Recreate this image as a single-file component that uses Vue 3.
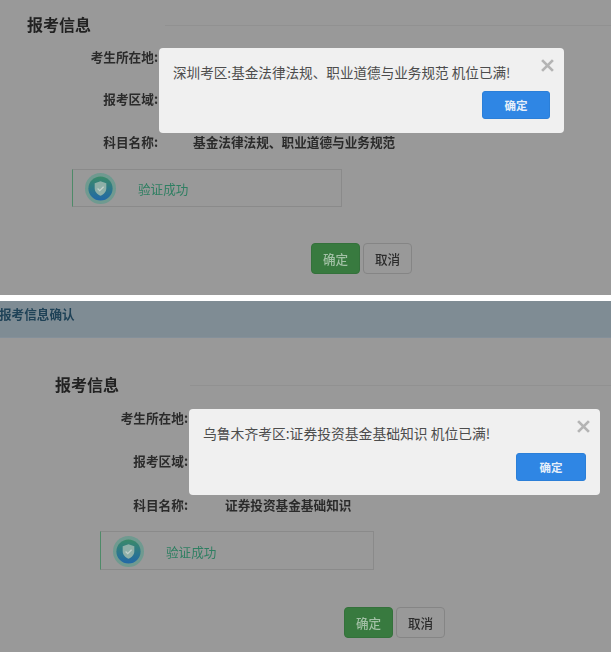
<script setup>
const panels = [
  {
    id: 'top',
    region: '基金法律法规、职业道德与业务规范',
    message: '深圳考区:基金法律法规、职业道德与业务规范 机位已满!',
  },
  {
    id: 'bottom',
    region: '证券投资基金基础知识',
    message: '乌鲁木齐考区:证券投资基金基础知识 机位已满!',
  },
]
</script>

<template>
  <div class="page">
    <section v-for="p in panels" :key="p.id" class="panel" :class="p.id">
      <div v-if="p.id === 'bottom'" class="topbar">报考信息确认</div>
      <div class="content">
        <div class="heading">
          <h2>报考信息</h2>
          <span class="rule"></span>
        </div>
        <div class="row first"><span class="label">考生所在地:</span></div>
        <div class="row second"><span class="label">报考区域:</span></div>
        <div class="row third">
          <span class="label">科目名称:</span>
          <span class="value">{{ p.region }}</span>
        </div>
        <div class="verify">
          <svg class="badge" viewBox="0 0 32 32" aria-hidden="true">
            <defs>
              <linearGradient :id="'g-' + p.id" x1="0" y1="0" x2="0" y2="1">
                <stop offset="0" stop-color="#3a8a68" />
                <stop offset="1" stop-color="#2168a8" />
              </linearGradient>
            </defs>
            <circle cx="16" cy="16" r="16" fill="#6f9a90" />
            <circle cx="16" cy="16" r="12.5" :fill="'url(#g-' + p.id + ')'" />
            <path d="M16 8.5l6 2v5c0 4-2.6 6.6-6 8-3.400-1.400-6-4-6-8v-5z" fill="#8fb0a8" />
            <path d="M13 16l2.200 2.200 4-4" fill="none" stroke="#c3d2cd" stroke-width="1.300" />
          </svg>
          <span class="verify-text">验证成功</span>
        </div>
        <div class="actions">
          <button class="btn ok" type="button">确定</button>
          <button class="btn cancel" type="button">取消</button>
        </div>
      </div>
      <div class="dialog">
        <p class="message">{{ p.message }}</p>
        <svg class="close" viewBox="0 0 12 12" aria-hidden="true">
          <path d="M1 1l10 10M11 1L1 11" fill="none" stroke="#b4b4b4" stroke-width="2.500" />
        </svg>
        <button class="dialog-btn" type="button">确定</button>
      </div>
    </section>
  </div>
</template>

<style scoped>
.page {
  width: 611px;
  height: 652px;
  background: #fff;
  font-family: "Noto Sans CJK SC", "Liberation Sans", sans-serif;
  overflow: hidden;
}
.panel {
  position: relative;
  background: #999999;
  overflow: hidden;
}
.top {
  height: 295px;
  margin-bottom: 6px;
}
.bottom {
  height: 351px;
}
.topbar {
  height: 37px;
  line-height: 25px;
  background: #7f8c94;
  border-bottom: 1px solid #84909a;
  color: #1f4257;
  font-size: 12.600px;
  font-weight: 700;
  box-sizing: border-box;
  filter: blur(0.3px);
  text-indent: -1px;
}
.content {
  filter: blur(0.35px);
}
.heading {
  display: flex;
  align-items: center;
}
.top .heading {
  padding: 13px 0 0 27px;
}
.bottom .heading {
  padding: 35px 0 0 55px;
}
.heading h2 {
  margin: 0;
  font-size: 16px;
  line-height: 22px;
  font-weight: 700;
  color: #222;
}
.rule {
  flex: 1;
  height: 1px;
  margin-top: 2px;
  background: #919191;
}
.top .rule {
  margin-left: 74px;
}
.bottom .rule {
  margin-left: 71px;
}
.row {
  display: flex;
  align-items: center;
  height: 20px;
  font-size: 12.650px;
  font-weight: 700;
  color: #2b2b2b;
}
.label {
  text-align: right;
  white-space: nowrap;
}
.top .label {
  width: 158px;
}
.bottom .label {
  width: 188px;
}
.first {
  margin-top: 12px;
}
.top .first {
  margin-top: 11px;
}
.top .second {
  margin-top: 22px;
}
.bottom .second {
  margin-top: 23px;
}
.top .third {
  margin-top: 23px;
}
.bottom .third {
  margin-top: 24px;
}
.top .value {
  margin-left: 35px;
}
.bottom .value {
  margin-left: 37px;
}
.verify {
  display: flex;
  align-items: center;
  box-sizing: border-box;
  border: 1px solid #8a8a8a;
  border-left: 1px solid #4e8a68;
}
.top .verify {
  width: 270px;
  height: 38px;
  margin: 18px 0 0 72px;
  padding-left: 12px;
}
.bottom .verify {
  width: 274px;
  height: 39px;
  margin: 17px 0 0 100px;
  padding: 2px 0 0 12px;
}
.badge {
  width: 31px;
  height: 31px;
  flex: none;
}
.verify-text {
  margin-left: 22px;
  font-size: 12.600px;
  color: #2f7f62;
}
.actions {
  display: flex;
  gap: 3px;
}
.top .actions {
  margin: 36px 0 0 311px;
}
.bottom .actions {
  margin: 37px 0 0 344px;
}
.btn {
  width: 49px;
  height: 31px;
  padding: 0;
  border-radius: 4px;
  font-family: inherit;
  font-size: 12.600px;
  font-weight: 500;
  box-sizing: border-box;
}
.ok {
  background: #387a3f;
  border: 1px solid #34713b;
  color: #a2c0a5;
}
.cancel {
  background: #999;
  border: 1px solid #858585;
  color: #2b2b2b;
}
.dialog {
  position: absolute;
  background: #f0f0f0;
  border-radius: 4px;
  box-sizing: border-box;
}
.top .dialog {
  left: 159px;
  top: 48px;
  width: 405px;
  height: 85px;
}
.bottom .dialog {
  left: 189px;
  top: 108px;
  width: 411px;
  height: 86px;
}
.message {
  position: absolute;
  left: 14px;
  top: 14px;
  margin: 0;
  white-space: nowrap;
  line-height: 20px;
  color: #4c4c4c;
}
.top .message {
  font-size: 13.600px;
}
.bottom .message {
  font-size: 13.800px;
}
.close {
  position: absolute;
  width: 13px;
  height: 13px;
  right: 10px;
  top: 11px;
}
.dialog-btn {
  position: absolute;
  right: 14px;
  bottom: 14px;
  height: 28px;
  padding: 0;
  background: #2f86e4;
  border: 1px solid #2b7fd8;
  border-radius: 3px;
  color: #e6effa;
  font-family: inherit;
  font-size: 11.500px;
  font-weight: 700;
}
.top .dialog-btn {
  width: 68px;
}
.bottom .dialog-btn {
  width: 70px;
}
</style>
